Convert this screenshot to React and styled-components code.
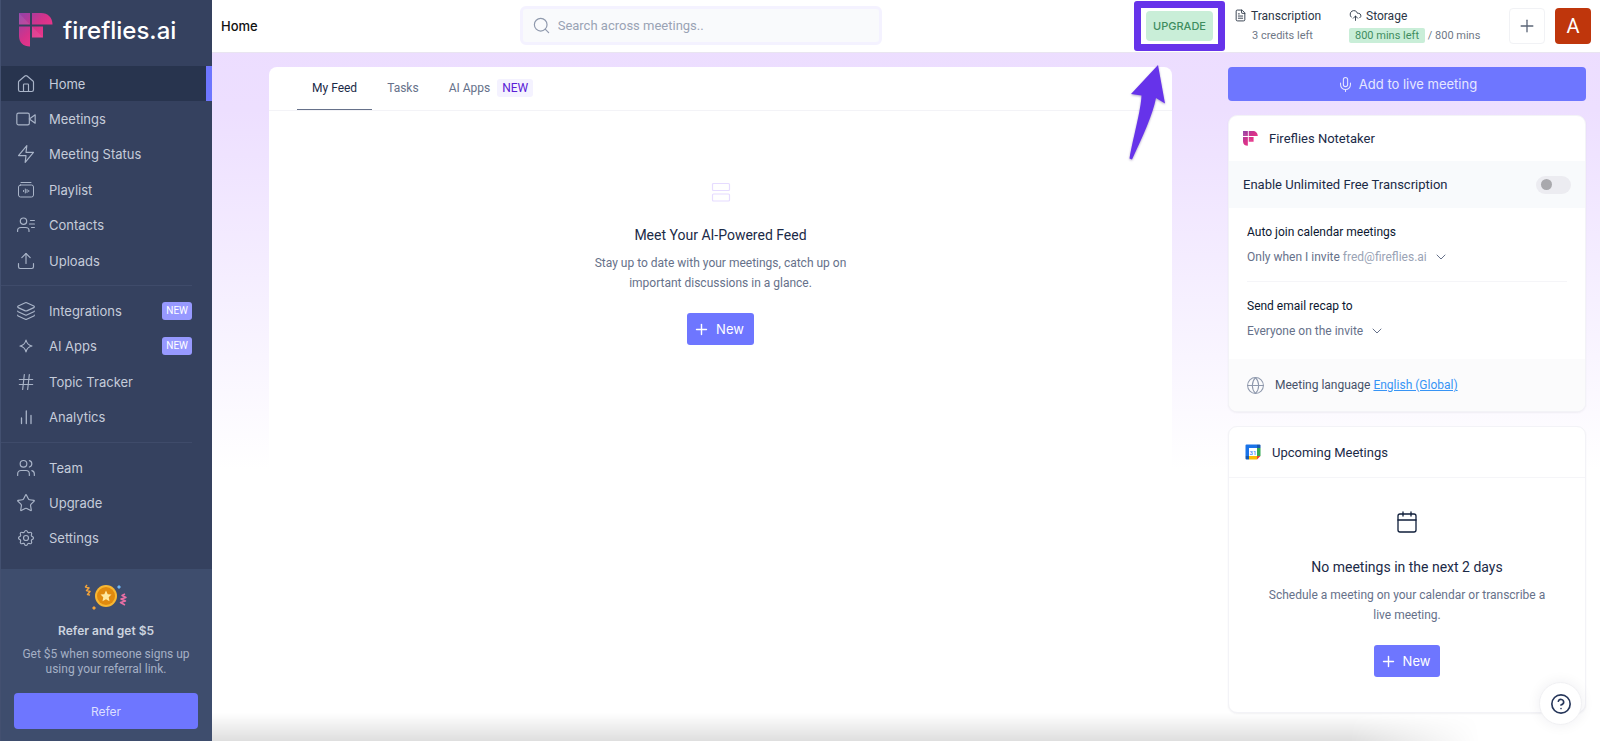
import React from "react";
import styled, { createGlobalStyle } from "styled-components";
import {
  House,
  Upload,
  Layers,
  Hash,
  Users,
  Star,
  Search,
  FileText,
  CloudUpload,
  Plus,
  Mic,
  ChevronDown,
  Globe,
  Calendar,
  CircleQuestionMark,
} from "lucide-react";
import { FiVideo, FiZap } from "react-icons/fi";
import { TbSettings } from "react-icons/tb";

const GlobalStyle = createGlobalStyle`
  * {
    box-sizing: border-box;
  }
  body {
    margin: 0;
    font-family: Roboto, "Liberation Sans", sans-serif;
    font-size: 13px;
    color: #0f1e3a;
    background: #ffffff;
  }
  button, input {
    font-family: inherit;
  }
  h1, h2, h3, p {
    margin: 0;
    font-weight: 400;
  }
`;

const Page = styled.div`
  display: grid;
  grid-template-columns: 212px minmax(0, 1fr);
  min-height: 100vh;
`;

/* Sidebar */

const Sidebar = styled.aside`
  display: flex;
  flex-direction: column;
  background: #35415f;
  border-left: 1px solid #435070;
`;

const Brand = styled.a`
  display: flex;
  align-items: center;
  gap: 10px;
  height: 66px;
  padding: 0 0 6px 18px;
  color: #ffffff;
  font-family: Inter, sans-serif;
  font-size: 24px;
  font-weight: 500;
  text-decoration: none;
`;

const Nav = styled.nav`
  display: flex;
  flex-direction: column;
  flex: 1;
  padding-bottom: 13px;
`;

const NavLink = styled.a`
  display: flex;
  align-items: center;
  flex: 1;
  gap: 13px;
  padding: 0 14px 0 15px;
  border-right: 6px solid ${(props) => (props.$active ? "#6e76ff" : "transparent")};
  background: ${(props) => (props.$active ? "#28344e" : "transparent")};
  background-clip: padding-box;
  color: #c5ccda;
  font-family: Inter, sans-serif;
  font-size: 13px;
  line-height: 16px;
  text-decoration: none;

  svg {
    color: #a9b4c8;
  }
`;

const NavBadge = styled.span`
  margin-left: auto;
  padding: 0 4px;
  border-radius: 3px;
  background: #9799ff;
  color: #ffffff;
  font-family: Roboto, sans-serif;
  font-size: 10px;
  line-height: 18px;
`;

const Divider = styled.hr`
  width: 191px;
  height: 1px;
  margin: 7px 0;
  border: 0;
  background: #3f4b6a;
`;

const ReferPanel = styled.section`
  display: flex;
  flex-direction: column;
  align-items: center;
  padding: 14px 14px 12px 13px;
  background: #3e4d6d;
  text-align: center;
`;

const ReferTitle = styled.h3`
  margin-top: 12px;
  color: #ccd3df;
  font-family: Inter, sans-serif;
  font-size: 12px;
  font-weight: 600;
  line-height: 16px;
`;

const ReferText = styled.p`
  width: 180px;
  margin: 8px 0 16px;
  color: #a5b0c5;
  font-size: 12px;
  line-height: 15px;
`;

const ReferButton = styled.button`
  width: 100%;
  height: 36px;
  border: 0;
  border-radius: 4px;
  background: #6e76ff;
  color: #dcdfff;
  font-family: Inter, sans-serif;
  font-size: 12px;
`;

/* Header */

const Main = styled.div`
  display: flex;
  flex-direction: column;
  background: linear-gradient(#ecdcff 0, #eddfff 110px, #f6f0ff 300px, #ffffff 470px);
`;

const Header = styled.header`
  display: grid;
  grid-template-columns: minmax(0, 8fr) 362px minmax(0, 19fr);
  align-items: center;
  height: 53px;
  padding: 0 9px 1px;
  border-bottom: 1px solid #e9e5f1;
  background: #ffffff;
`;

const PageTitle = styled.h1`
  color: #111111;
  font-family: Inter, sans-serif;
  font-size: 13px;
  font-weight: 500;
`;

const SearchBox = styled.label`
  display: flex;
  align-items: center;
  gap: 7px;
  height: 39px;
  padding: 0 9px;
  border: 3px solid #f4f2ff;
  border-radius: 6px;
  background: #f9fafc;
  color: #8f99ad;

  input {
    flex: 1;
    min-width: 0;
    padding: 0;
    border: 0;
    outline: 0;
    background: none;
    font-size: 13px;
  }
  input::placeholder {
    color: #9aa3b5;
  }
`;

const HeaderTools = styled.div`
  display: flex;
  align-items: center;
  justify-content: flex-end;
`;

const Highlight = styled.div`
  position: relative;
  padding: 3px 5px;
  border: 7px solid #6633ea;
  border-radius: 3px;
  margin-right: 9px;
`;

const UpgradeButton = styled.button`
  display: block;
  width: 67px;
  height: 30px;
  padding: 0;
  border: 0;
  border-radius: 4px;
  background: #c9eed8;
  color: #3f8d5f;
  font-family: Inter, sans-serif;
  font-size: 11px;
  font-weight: 500;
`;

const Arrow = styled.svg`
  position: absolute;
  top: 54px;
  left: -14px;
  z-index: 2;
  filter: drop-shadow(0 1px 1px rgba(60, 30, 120, 0.4));
`;

const Quota = styled.div`
  width: ${(props) => props.$width};
  padding-top: 2px;
`;

const QuotaTitle = styled.div`
  display: flex;
  align-items: center;
  gap: 4px;
  color: #2c3646;
  font-size: 12px;
  line-height: 18px;
`;

const QuotaValue = styled.div`
  padding-left: ${(props) => (props.$indent ? "18px" : 0)};
  color: #6f7886;
  font-size: 11px;
  line-height: 22px;
`;

const Left = styled.span`
  display: inline-block;
  padding: 0 6px;
  border-radius: 2px;
  background: #c9eed8;
  color: #3f8d5f;
  line-height: 15px;
`;

const AddButton = styled.button`
  display: grid;
  place-items: center;
  width: 36px;
  height: 36px;
  margin-right: 10px;
  padding: 0;
  border: 1px solid #f1f2f5;
  border-radius: 4px;
  background: #ffffff;
  color: #5b6577;
`;

const Avatar = styled.button`
  width: 36px;
  height: 36px;
  padding: 0;
  border: 0;
  border-radius: 4px;
  background: #bf360c;
  color: #ffffff;
  font-size: 20px;
`;

/* Content */

const Content = styled.main`
  display: grid;
  grid-template-columns: minmax(0, 1fr) 358px;
  align-items: start;
  gap: 56px;
  padding: 14px 14px 20px 57px;
`;

const Feed = styled.section`
  min-height: 640px;
  border-radius: 8px;
  background: #ffffff;
`;

const Tabs = styled.div`
  display: flex;
  height: 44px;
  padding-left: 28px;
  border-bottom: 1px solid #f3f3f7;
`;

const Tab = styled.button`
  display: flex;
  align-items: center;
  gap: 7px;
  padding: 0 15px;
  border: 0;
  border-bottom: 1px solid ${(props) => (props.$active ? "#66718a" : "transparent")};
  background: none;
  color: ${(props) => (props.$active ? "#1b2a47" : "#66718a")};
  font-size: 12px;
`;

const TabBadge = styled.span`
  padding: 0 5px;
  border-radius: 3px;
  background: #f4f2ff;
  color: #5a20d6;
  font-size: 12px;
  line-height: 18px;
`;

const EmptyState = styled.div`
  display: flex;
  flex-direction: column;
  align-items: center;
  padding: ${(props) => props.$top} 30px 35px;
  text-align: center;
`;

const EmptyTitle = styled.h2`
  margin-top: 23px;
  color: #1b2a47;
  font-size: 14px;
  line-height: 20px;
`;

const EmptyText = styled.p`
  width: 290px;
  max-width: 100%;
  margin: 8px 0 20px;
  color: #66718a;
  font-size: 12px;
  line-height: 20px;
`;

const NewButton = styled.button`
  display: flex;
  align-items: center;
  gap: 6px;
  height: 32px;
  padding: 0 10px 0 6px;
  border: 0;
  border-radius: 3px;
  background: #6e76ff;
  color: #ffffff;
  font-family: Inter, sans-serif;
  font-size: 13px;
`;

const Side = styled.aside`
  display: flex;
  flex-direction: column;
  gap: 14px;
`;

const LiveButton = styled.button`
  display: flex;
  align-items: center;
  justify-content: center;
  gap: 5px;
  height: 34px;
  border: 0;
  border-radius: 4px;
  background: #6e76ff;
  color: #e6e7ff;
  font-family: Inter, sans-serif;
  font-size: 13px;
`;

const Card = styled.section`
  overflow: hidden;
  border: 1px solid #f3f3f7;
  border-radius: 9px;
  background: #ffffff;
  box-shadow: 0 1px 2px rgba(30, 30, 60, 0.06);
`;

const CardHeader = styled.header`
  display: flex;
  align-items: center;
  gap: 11px;
  height: ${(props) => props.$height};
  padding: 0 ${(props) => props.$pad};
`;

const CardTitle = styled.h2`
  color: #1b2a47;
  font-size: 13px;
`;

const SwitchRow = styled.label`
  display: flex;
  align-items: center;
  justify-content: space-between;
  height: 47px;
  padding: 0 14px;
  background: #f8fafc;
  color: #1b2a47;
`;

const Switch = styled.input`
  display: flex;
  align-items: center;
  width: 35px;
  height: 18px;
  margin: 0;
  padding: 0 5px;
  appearance: none;
  border-radius: 9px;
  background: #ececf1;

  &::before {
    content: "";
    width: 11px;
    height: 11px;
    border-radius: 50%;
    background: #a9a9ad;
  }
  &:checked {
    justify-content: flex-end;
    background: #6e76ff;
  }
`;

const Options = styled.div`
  padding: 0 18px;
`;

const Option = styled.div`
  display: flex;
  flex-direction: column;
  align-items: flex-start;
  gap: 5px;
  height: 73px;
  padding-top: 14px;
  color: #0b1730;
  font-size: 12px;
  line-height: 20px;

  & + & {
    height: 78px;
    border-top: 1px solid #f5f5f8;
  }
`;

const Picker = styled.button`
  display: flex;
  align-items: center;
  padding: 0;
  border: 0;
  background: none;
  color: #66718a;
  font-size: 12px;
  line-height: 20px;

  em {
    margin-left: 3px;
    color: #9aa3b5;
    font-style: normal;
  }
  svg {
    margin-left: 6px;
  }
`;

const Language = styled.footer`
  display: flex;
  align-items: center;
  gap: 10px;
  height: 52px;
  padding: 0 17px;
  background: #fbfbfc;
  color: #46526a;
  font-size: 12px;

  svg {
    color: #8f99ad;
  }
  a {
    color: #3794f5;
  }
`;

const CardLine = styled.hr`
  height: 1px;
  margin: 0;
  border: 0;
  background: #f5f5f8;
`;

const HelpButton = styled.button`
  position: fixed;
  right: 18px;
  bottom: 16px;
  display: grid;
  place-items: center;
  width: 43px;
  height: 43px;
  padding: 0;
  border: 1px solid #f0f0f3;
  border-radius: 50%;
  background: #ffffff;
  color: #26365a;
  box-shadow: 0 0 14px rgba(30, 30, 60, 0.07);
`;

const BottomShade = styled.div`
  position: fixed;
  left: 212px;
  right: 120px;
  bottom: 0;
  height: 28px;
  background: linear-gradient(rgba(0, 0, 0, 0), rgba(0, 0, 0, 0.13));
  mask-image: linear-gradient(to right, #000 calc(100% - 130px), transparent);
  pointer-events: none;
`;

/* Drawings */

function Logo({ size, id }) {
  return (
    <svg width={size} height={size} viewBox="0 0 34 34" aria-hidden="true">
      <defs>
        <linearGradient id={id} x1="0" y1="0" x2="1" y2="1">
          <stop offset="0" stopColor="#8e43a8" />
          <stop offset="0.45" stopColor="#d6328a" />
          <stop offset="1" stopColor="#ff3b8c" />
        </linearGradient>
      </defs>
      <g fill={`url(#${id})`}>
        <path
          d="M0 0H11V11.500H0ZM13 0H22C29 0 33.500 4.500 33.500 11.500H13ZM0 13.500H11V33.500C4.500 33.500 0 29.500 0 23ZM13 13.500H24V24.500H13Z"
        />
      </g>
      <path d="M0 0L11 11.500H0ZM13 13.500L24 24.500H13Z" fill="#ffffff" opacity="0.08" />
    </svg>
  );
}

function PlaylistIcon() {
  return (
    <svg width="20" height="20" viewBox="-1 -1 20 20" fill="none" stroke="currentColor" strokeLinecap="round">
      <path d="M4 1.500H14" />
      <rect x="1.500" y="4" width="15" height="12" rx="2" />
      <path d="M6.500 9.500V10.500M8.300 8V12M10 8.500V11.500M11.700 9.500V10.500" />
    </svg>
  );
}

function ContactsIcon() {
  return (
    <svg
      width="20"
      height="20"
      viewBox="-1 -1 20 20"
      fill="none"
      stroke="currentColor"
      strokeLinecap="round"
      strokeWidth="1.2"
    >
      <circle cx="6.500" cy="5.200" r="3.200" />
      <path d="M0.600 15.500V14.500C0.600 12.500 2.200 11.500 4 11.500H8.500C10.500 11.500 12 12.500 12 14.500V15.500M13.500 4.500H17.400M12.500 8H17.400M14.500 11.500H17.400" />
    </svg>
  );
}

function SparkIcon() {
  return (
    <svg
      width="20"
      height="20"
      viewBox="-1 -1 20 20"
      fill="none"
      stroke="currentColor"
      strokeLinejoin="round"
      strokeWidth="1.2"
    >
      <path d="M9 3C9.700 6.400 11.600 8.300 15 9C11.600 9.700 9.700 11.600 9 15C8.300 11.600 6.400 9.700 3 9C6.400 8.300 8.300 6.400 9 3Z" />
    </svg>
  );
}

function BarsIcon() {
  return (
    <svg
      width="20"
      height="20"
      viewBox="-1 -1 20 20"
      fill="none"
      stroke="currentColor"
      strokeLinecap="round"
      strokeWidth="1.3"
    >
      <path d="M4.500 10V15.500M9.300 3V15.500M14 7.500V15.500" />
    </svg>
  );
}

function CoinIcon() {
  return (
    <svg width="44" height="28" viewBox="0 0 44 28" fill="none">
      <circle cx="22" cy="13" r="11" fill="#f7b733" />
      <circle cx="22" cy="13" r="9" fill="#e08a0e" />
      <path
        d="M22 7.500L23.700 11.200L27.500 11.600L24.700 14.300L25.500 18.200L22 16.200L18.500 18.200L19.300 14.300L16.500 11.600L20.300 11.200Z"
        fill="#ffe9a0"
      />
      <path
        d="M3 2L1.500 4L5 5L2.500 7.500L6 8.500L3.500 11.500L6 12"
        stroke="#f2a33a"
        strokeWidth="1.500"
        strokeLinejoin="round"
      />
      <path
        d="M41 11L38 12.500L42 14.500L37 16L41.500 18L36.500 19.500L41 22"
        stroke="#e96fa4"
        strokeWidth="1.500"
        strokeLinejoin="round"
      />
      <path d="M35 2L37 4L35 6L33 4Z" fill="#6fb7f5" />
      <path d="M10 23L12 25L10 27L8 25Z" fill="#f2a33a" />
    </svg>
  );
}

function FeedIcon() {
  return (
    <svg width="20" height="20" viewBox="0 0 20 20" fill="none" stroke="#e6dcff" strokeWidth="1.2">
      <rect x="1.500" y="1.500" width="17" height="7" rx="1" />
      <rect x="1.500" y="12" width="17" height="7" rx="1" />
    </svg>
  );
}

function GoogleCalendarIcon() {
  return (
    <svg width="16" height="16" viewBox="0 0 16 16">
      <path d="M1.500 0.500H12V4H4V12H0.500V1.500Q0.500 0.500 1.500 0.500Z" fill="#1a73e8" />
      <path d="M12 0.500H14.500Q15.500 0.500 15.500 1.500V4H12Z" fill="#1557b0" />
      <path d="M12 4H15.500V12H12Z" fill="#34a853" />
      <path d="M4 12H12V15.500H4Z" fill="#fbbc04" />
      <path d="M0.500 12H4V15.500H1.500Q0.500 15.500 0.500 14.500Z" fill="#1557b0" />
      <path d="M12 12H15.500L12 15.500Z" fill="#ea4335" />
      <path d="M4 4H12V12H4Z" fill="#ffffff" />
      <text x="8" y="10.500" textAnchor="middle" fontSize="6" fontFamily="Roboto" fontWeight="500" fill="#4285f4">
        31
      </text>
    </svg>
  );
}

const navGroups = [
  [
    { label: "Home", icon: <House size={20} strokeWidth={1.4} />, active: true },
    { label: "Meetings", icon: <FiVideo size={20} strokeWidth={1.4} /> },
    { label: "Meeting Status", icon: <FiZap size={20} strokeWidth={1.4} /> },
    { label: "Playlist", icon: <PlaylistIcon /> },
    { label: "Contacts", icon: <ContactsIcon /> },
    { label: "Uploads", icon: <Upload size={20} strokeWidth={1.4} /> },
  ],
  [
    { label: "Integrations", icon: <Layers size={20} strokeWidth={1.4} />, isNew: true },
    { label: "AI Apps", icon: <SparkIcon />, isNew: true },
    { label: "Topic Tracker", icon: <Hash size={20} strokeWidth={1.4} /> },
    { label: "Analytics", icon: <BarsIcon /> },
  ],
  [
    { label: "Team", icon: <Users size={20} strokeWidth={1.4} /> },
    { label: "Upgrade", icon: <Star size={20} strokeWidth={1.4} /> },
    { label: "Settings", icon: <TbSettings size={20} strokeWidth={1.4} /> },
  ],
];

function SideNav() {
  return (
    <Sidebar>
      <Brand href="#">
        <Logo size={34} id="brand" />
        fireflies.ai
      </Brand>
      <Nav>
        {navGroups.map((group, index) => (
          <React.Fragment key={index}>
            {index > 0 && <Divider />}
            {group.map((item) => (
              <NavLink key={item.label} href="#" $active={item.active}>
                {item.icon}
                {item.label}
                {item.isNew && <NavBadge>NEW</NavBadge>}
              </NavLink>
            ))}
          </React.Fragment>
        ))}
      </Nav>
      <ReferPanel>
        <CoinIcon />
        <ReferTitle>Refer and get $5</ReferTitle>
        <ReferText>Get $5 when someone signs up using your referral link.</ReferText>
        <ReferButton>Refer</ReferButton>
      </ReferPanel>
    </Sidebar>
  );
}

function TopBar() {
  return (
    <Header>
      <PageTitle>Home</PageTitle>
      <SearchBox>
        <Search size={19} strokeWidth={1.5} />
        <input type="text" placeholder="Search across meetings.." aria-label="Search" />
      </SearchBox>
      <HeaderTools>
        <Highlight>
          <UpgradeButton>UPGRADE</UpgradeButton>
          <Arrow width="40" height="100" viewBox="0 0 40 100">
            <path
              d="M31 3L4 32L14.500 33.500C14 48 6 76 2.500 96.500L5 97.500C16 74 26 52 29 36L38 41.500Z"
              fill="#6633ea"
            />
          </Arrow>
        </Highlight>
        <Quota $width="115px">
          <QuotaTitle>
            <FileText size={13} strokeWidth={1.7} />
            Transcription
          </QuotaTitle>
          <QuotaValue $indent>3 credits left</QuotaValue>
        </Quota>
        <Quota $width="160px">
          <QuotaTitle>
            <CloudUpload size={13} strokeWidth={1.7} />
            Storage
          </QuotaTitle>
          <QuotaValue>
            <Left>800 mins left</Left> / 800 mins
          </QuotaValue>
        </Quota>
        <AddButton aria-label="Add">
          <Plus size={20} strokeWidth={1.6} />
        </AddButton>
        <Avatar>A</Avatar>
      </HeaderTools>
    </Header>
  );
}

function NotetakerCard() {
  return (
    <Card>
      <CardHeader $height="45px" $pad="14px">
        <Logo size={15} id="notetaker" />
        <CardTitle>Fireflies Notetaker</CardTitle>
      </CardHeader>
      <SwitchRow>
        Enable Unlimited Free Transcription
        <Switch type="checkbox" />
      </SwitchRow>
      <Options>
        <Option>
          Auto join calendar meetings
          <Picker>
            Only when I invite <em>fred@fireflies.ai</em>
            <ChevronDown size={16} strokeWidth={1.5} />
          </Picker>
        </Option>
        <Option>
          Send email recap to
          <Picker>
            Everyone on the invite
            <ChevronDown size={16} strokeWidth={1.5} />
          </Picker>
        </Option>
      </Options>
      <Language>
        <Globe size={19} strokeWidth={1.3} />
        <span>
          Meeting language <a href="#">English (Global)</a>
        </span>
      </Language>
    </Card>
  );
}

function UpcomingCard() {
  return (
    <Card>
      <CardHeader $height="50px" $pad="16px">
        <GoogleCalendarIcon />
        <CardTitle>Upcoming Meetings</CardTitle>
      </CardHeader>
      <CardLine />
      <EmptyState $top="32px">
        <Calendar size={24} strokeWidth={1.3} />
        <EmptyTitle>No meetings in the next 2 days</EmptyTitle>
        <EmptyText>Schedule a meeting on your calendar or transcribe a live meeting.</EmptyText>
        <NewButton>
          <Plus size={17} strokeWidth={2} />
          New
        </NewButton>
      </EmptyState>
    </Card>
  );
}

function App() {
  return (
    <Page>
      <GlobalStyle />
      <SideNav />
      <Main>
        <TopBar />
        <Content>
          <Feed>
            <Tabs>
              <Tab $active>My Feed</Tab>
              <Tab>Tasks</Tab>
              <Tab>
                AI Apps <TabBadge>NEW</TabBadge>
              </Tab>
            </Tabs>
            <EmptyState $top="71px">
              <FeedIcon />
              <EmptyTitle>Meet Your AI-Powered Feed</EmptyTitle>
              <EmptyText>
                Stay up to date with your meetings, catch up on important discussions in a glance.
              </EmptyText>
              <NewButton>
                <Plus size={17} strokeWidth={2} />
                New
              </NewButton>
            </EmptyState>
          </Feed>
          <Side>
            <LiveButton>
              <Mic size={17} strokeWidth={1.5} />
              Add to live meeting
            </LiveButton>
            <NotetakerCard />
            <UpcomingCard />
          </Side>
        </Content>
      </Main>
      <BottomShade />
      <HelpButton aria-label="Help">
        <CircleQuestionMark size={22} strokeWidth={1.8} />
      </HelpButton>
    </Page>
  );
}

export default App;
